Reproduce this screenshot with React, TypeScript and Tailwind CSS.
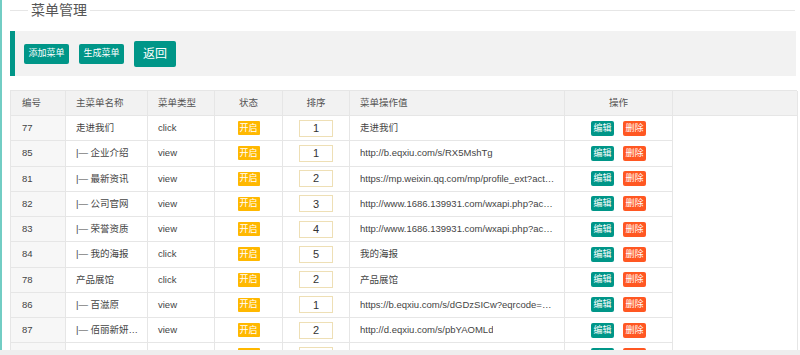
import React from 'react';

interface MenuRow {
  id: number;
  name: string;
  type: string;
  sort: number;
  value: string;
}

const rows: MenuRow[] = [
  { id: 77, name: '走进我们', type: 'click', sort: 1, value: '走进我们' },
  { id: 85, name: '|— 企业介绍', type: 'view', sort: 1, value: 'http://b.eqxiu.com/s/RX5MshTg' },
  { id: 81, name: '|— 最新资讯', type: 'view', sort: 2, value: 'https://mp.weixin.qq.com/mp/profile_ext?action=home&__biz=MzA' },
  { id: 82, name: '|— 公司官网', type: 'view', sort: 3, value: 'http://www.1686.139931.com/wxapi.php?ac=index' },
  { id: 83, name: '|— 荣誉资质', type: 'view', sort: 4, value: 'http://www.1686.139931.com/wxapi.php?ac=honor' },
  { id: 84, name: '|— 我的海报', type: 'click', sort: 5, value: '我的海报' },
  { id: 78, name: '产品展馆', type: 'click', sort: 2, value: '产品展馆' },
  { id: 86, name: '|— 百滋原', type: 'view', sort: 1, value: 'https://b.eqxiu.com/s/dGDzSICw?eqrcode=1&from=timeline' },
  { id: 87, name: '|— 佰丽新妍化妆品', type: 'view', sort: 2, value: 'http://d.eqxiu.com/s/pbYAOMLd' },
  { id: 88, name: '|— 联系我们', type: 'view', sort: 3, value: 'http://d.eqxiu.com/s/contact' },
];

const cols = 'grid grid-cols-[55px_82px_67px_68px_67px_215px_108px_125px]';
const cell = 'border-r border-b border-[#e6e6e6] flex items-center overflow-hidden';

function HeaderRow() {
  return (
    <div className={`${cols} h-[26px] bg-[#f2f2f2] text-[#555] border-t border-[#e6e6e6]`}>
      <div className={`${cell} px-[11px]`}>编号</div>
      <div className={`${cell} px-[10px]`}>主菜单名称</div>
      <div className={`${cell} px-[10px]`}>菜单类型</div>
      <div className={`${cell} justify-center`}>状态</div>
      <div className={`${cell} justify-center`}>排序</div>
      <div className={`${cell} px-[10px]`}>菜单操作值</div>
      <div className={`${cell} justify-center`}>操作</div>
      <div className={cell}></div>
    </div>
  );
}

function BodyRow({ row }: { row: MenuRow }) {
  return (
    <div className={`${cols} h-[25.25px] text-[#444]`}>
      <div className={`${cell} px-[11px] bg-[#f7f7f7]`}>{row.id}</div>
      <div className={`${cell} pl-[10px] pr-[4px]`}>
        <span className="truncate">{row.name}</span>
      </div>
      <div className={`${cell} px-[10px]`}>{row.type}</div>
      <div className={`${cell} justify-center`}>
        <span className="w-[22px] h-[14px] bg-[#FFB800] text-white text-[9px] leading-none flex items-center justify-center rounded-[1px]">
          开启
        </span>
      </div>
      <div className={`${cell} justify-center`}>
        <span className="w-[34px] h-[17px] border border-[#eedfb5] bg-white text-[#333] text-[11px] flex items-center justify-center">
          {row.sort}
        </span>
      </div>
      <div className={`${cell} pl-[10px] pr-[8px]`}>
        <span className="truncate">{row.value}</span>
      </div>
      <div className={`${cell} justify-center gap-[9px]`}>
        <span className="w-[23px] h-[15px] bg-[#009688] text-white text-[9px] leading-none flex items-center justify-center rounded-[2px]">
          编辑
        </span>
        <span className="w-[23px] h-[15px] bg-[#FF5722] text-white text-[9px] leading-none flex items-center justify-center rounded-[2px]">
          删除
        </span>
      </div>
      <div className="border-r border-[#e6e6e6]"></div>
    </div>
  );
}

export default function App() {
  return (
    <div className="w-[800px] h-[355px] overflow-hidden bg-white flex flex-col font-['Liberation_Sans','Noto_Sans_CJK_SC',sans-serif]">
      <div className="h-[350px] shrink-0 border-l-2 border-[#72cdc4] pl-[8px] pr-[3px] overflow-hidden">
        {/* Title */}
        <div className="h-[20px] flex items-center">
          <div className="w-[18px] h-px bg-[#e6e6e6]"></div>
          <span className="px-[3px] text-[14px] leading-none text-[#555]">菜单管理</span>
          <div className="flex-1 h-px bg-[#e6e6e6] mr-[2px]"></div>
        </div>

        {/* Toolbar */}
        <div className="mt-[11px] h-[45px] mr-[1px] bg-[#f2f2f2] border-l-[5px] border-[#009688] pl-[9px] flex items-center gap-[10px]">
          <button className="w-[45px] h-[20px] bg-[#009688] text-white text-[9px] rounded-[2px]">添加菜单</button>
          <button className="w-[45px] h-[20px] bg-[#009688] text-white text-[9px] rounded-[2px]">生成菜单</button>
          <button className="w-[42px] h-[26px] bg-[#009688] text-white text-[12px] rounded-[2px]">返回</button>
        </div>

        {/* Table */}
        <div className="mt-[14px] border-l border-[#e6e6e6] text-[9.5px]">
          <HeaderRow />
          {rows.map((row) => (
            <BodyRow key={row.id} row={row} />
          ))}
        </div>
      </div>
      <div className="flex-1 bg-[#eeeeee]"></div>
    </div>
  );
}
